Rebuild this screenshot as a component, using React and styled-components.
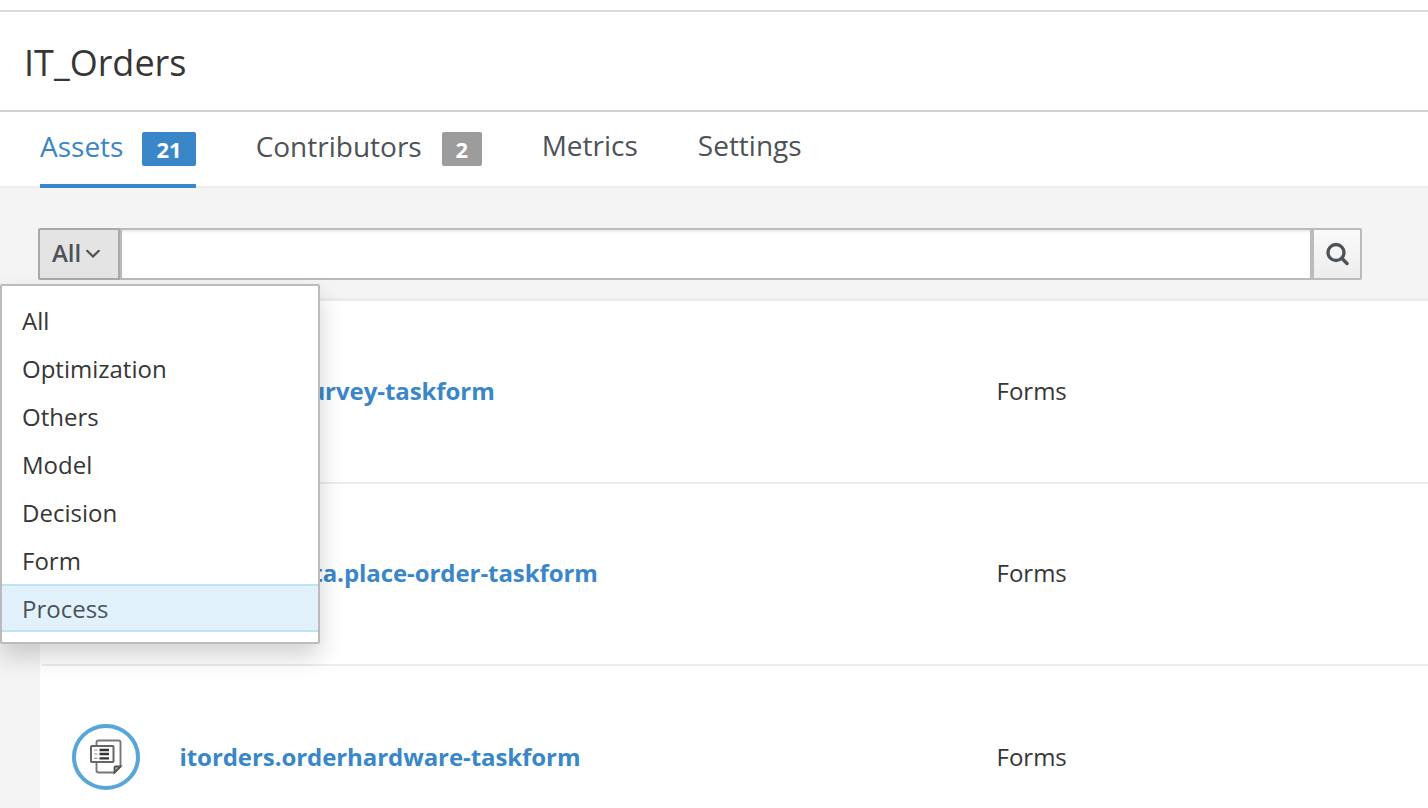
import React from "react";
import styled, { createGlobalStyle } from "styled-components";

const GlobalStyle = createGlobalStyle`
  * { box-sizing: border-box; }
  body {
    margin: 0;
    background: #f4f4f4;
    color: #363636;
    font-family: "Open Sans", "Noto Sans", sans-serif;
    font-size: 24px;
    line-height: 40px;
    overflow: hidden;
  }
`;

const Page = styled.div`
  width: 100%;
  height: 808px;
  overflow: hidden;
  display: flex;
  flex-direction: column;
`;

const TopStrip = styled.div`
  flex: none;
  height: 12px;
  background: #fff;
  border-bottom: 2px solid #dcdcdc;
`;

const TitleBar = styled.header`
  flex: none;
  height: 100px;
  padding: 26px 24px 0;
  background: #fff;
  border-bottom: 2px solid #d1d1d1;
`;

const Title = styled.h1`
  margin: 0;
  font-size: 36px;
  font-weight: 400;
  line-height: 50px;
`;

const Tabs = styled.nav`
  flex: none;
  display: flex;
  gap: 60px;
  height: 76px;
  padding: 0 40px;
  background: #fff;
  border-bottom: 2px solid #ededed;
`;

const Tab = styled.a`
  display: flex;
  height: 76px;
  padding-top: ${(p) => (p.$badged ? 14 : 13)}px;
  font-size: 28px;
  color: ${(p) => (p.$active ? "#3986c8" : "#4d5258")};
  border-bottom: 4px solid ${(p) => (p.$active ? "#3986c8" : "transparent")};
`;

const Badge = styled.span`
  height: 34px;
  margin: 6px 0 0 ${(p) => (p.$active ? 19 : 20)}px;
  padding: 0 ${(p) => (p.$active ? 14 : 13.7)}px;
  border-radius: 2px;
  background: ${(p) => (p.$active ? "#3986c8" : "#9c9c9c")};
  color: #fff;
  font-size: 22px;
  font-weight: 700;
  line-height: 34px;
`;

const Toolbar = styled.div`
  flex: none;
  position: relative;
  display: flex;
  height: 110px;
  padding: 40px 66px 0 38px;
`;

const FilterButton = styled.button`
  display: flex;
  align-items: center;
  gap: 5px;
  width: 82px;
  height: 52px;
  padding: 0 0 2px 12px;
  border: 2px solid #a9a9a9;
  border-radius: 2px 0 0 2px;
  background: #e4e4e4;
  color: #4d5258;
  font: 600 24px/44px "Open Sans", sans-serif;

  svg {
    margin-top: 2px;
  }
`;

const SearchInput = styled.input`
  flex: 1;
  min-width: 0;
  height: 52px;
  border: 2px solid #bbb;
  background: #fff;
  box-shadow: inset 0 2px 2px rgba(3, 3, 3, 0.075);
  outline: none;
`;

const SearchButton = styled.button`
  display: flex;
  align-items: center;
  justify-content: center;
  width: 50px;
  height: 52px;
  padding: 0;
  border: 2px solid #bbb;
  border-radius: 0 2px 2px 0;
  background: linear-gradient(#fafafa, #ededed);
`;

const Menu = styled.ul`
  position: absolute;
  z-index: 2;
  top: 96px;
  left: 0;
  width: 320px;
  height: 360px;
  margin: 0;
  padding: 10px 0;
  list-style: none;
  background: #fff;
  border: 2px solid #bbb;
  border-radius: 2px;
  box-shadow: 0 12px 24px rgba(3, 3, 3, 0.175);
`;

const MenuItem = styled.li`
  height: 48px;
  padding: 2px 20px;
  line-height: 42px;
  border: solid ${(p) => (p.$selected ? "#c3e1f2" : "transparent")};
  border-width: 2px 0;
  background: ${(p) => (p.$selected ? "#e1f2fc" : "transparent")};
  color: ${(p) => (p.$selected ? "#4d5258" : "#363636")};
`;

const AssetList = styled.main`
  flex: none;
  margin-left: 40px;
  padding-left: 2px;
  background: #fff;
  border-top: 3px solid #ececec;
`;

const AssetRow = styled.article`
  display: flex;
  align-items: center;
  height: ${(p) => p.$height}px;
  padding: 0 0 ${(p) => p.$lift}px 30px;
  border-bottom: 2px solid #ececec;
`;

const AssetIcon = styled.svg`
  flex: none;
  width: 68px;
  height: 68px;
`;

const AssetName = styled.a`
  width: 856.5px;
  padding-left: ${(p) => p.$indent}px;
  color: #3986c8;
  font-weight: 700;
  letter-spacing: -0.07px;
`;

const TYPES = ["All", "Optimization", "Others", "Model", "Decision", "Form", "Process"];

const ASSETS = [
  { name: "customer-survey-taskform", height: 183, indent: 36.5, lift: 2 },
  { name: "itorders-data.place-order-taskform", height: 182, indent: 40, lift: 2 },
  { name: "itorders.orderhardware-taskform", height: 184, indent: 39.5, lift: 0 },
];

function FormIcon() {
  return (
    <AssetIcon viewBox="0 0 68 68" fill="none">
      <ellipse cx="34" cy="34" rx="32" ry="31" fill="#fff" stroke="#57a5d9" strokeWidth="4" />
      <path
        d="M24.5 22V19.5Q24.5 17.5 26.5 17.5H46.5Q48.5 17.5 48.5 19.5V43.5L42.5 49.5H26.5Q24.5 49.5 24.5 47.5V40"
        stroke="#777"
        strokeWidth="1.9"
      />
      <path d="M42.5 49.5V44.5Q42.5 43.5 43.5 43.5H48.5Z" fill="#bbb" stroke="#555" strokeWidth="1.8" />
      <rect x="19" y="23" width="22.5" height="16" rx="0.8" fill="#fff" stroke="#666" strokeWidth="2" />
      <path d="M22 27H25.5M22 31H25.5M22 35.3H25.5" stroke="#999" strokeWidth="1.2" />
      <path d="M27.5 27H37M27.5 31H37M27.5 35.3H37" stroke="#333" strokeWidth="2.3" />
    </AssetIcon>
  );
}

export default function App() {
  return (
    <>
      <GlobalStyle />
      <Page>
        <TopStrip />
        <TitleBar>
          <Title>IT_Orders</Title>
        </TitleBar>
        <Tabs>
          <Tab $active $badged>
            Assets<Badge $active>21</Badge>
          </Tab>
          <Tab $badged>
            Contributors<Badge>2</Badge>
          </Tab>
          <Tab>Metrics</Tab>
          <Tab>Settings</Tab>
        </Tabs>
        <Toolbar>
          <FilterButton>
            All
            <svg width="14" height="10" viewBox="0 0 14 10" fill="none">
              <path d="M1.2 1.8L7 7.5L12.8 1.8" stroke="#4d5258" strokeWidth="2.2" strokeLinecap="round" />
            </svg>
          </FilterButton>
          <SearchInput />
          <SearchButton>
            <svg width="24" height="24" viewBox="0 0 24 24" fill="none">
              <circle cx="11" cy="10.5" r="8" stroke="#4d5258" strokeWidth="3.3" />
              <path d="M17 16.5L22 21.5" stroke="#4d5258" strokeWidth="3.4" strokeLinecap="round" />
            </svg>
          </SearchButton>
          <Menu>
            {TYPES.map((type) => (
              <MenuItem key={type} $selected={type === "Process"}>
                {type}
              </MenuItem>
            ))}
          </Menu>
        </Toolbar>
        <AssetList>
          {ASSETS.map((asset) => (
            <AssetRow key={asset.name} $height={asset.height} $lift={asset.lift}>
              <FormIcon />
              <AssetName $indent={asset.indent}>{asset.name}</AssetName>
              <span>Forms</span>
            </AssetRow>
          ))}
        </AssetList>
      </Page>
    </>
  );
}
